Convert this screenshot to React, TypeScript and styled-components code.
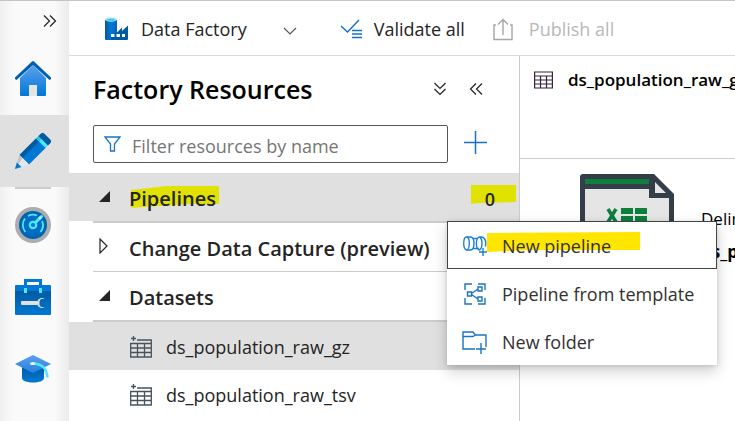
import React from "react";
import styled, { createGlobalStyle, css } from "styled-components";

const GlobalStyle = createGlobalStyle`
  * { box-sizing: border-box; }
  body { margin: 0; background: #fff; color: #242424; font: 400 18px/24px "Open Sans", "Noto Sans", sans-serif; }
  button, input { font: inherit; color: inherit; }
  svg { display: block; flex: none; }
`;

const Shell = styled.div`
  display: flex;
  height: 100vh;
  overflow: hidden;
  border-top: 1px solid #c4c4c4;
`;
const plainButton = css`
  display: flex;
  align-items: center;
  padding: 0;
  border: 0;
  background: none;
  text-align: left;
  white-space: nowrap;
`;
const Rail = styled.nav`
  flex: none;
  display: flex;
  flex-direction: column;
  width: 69px;
  background: linear-gradient(90deg, #f0f0f0, #fafafa 14px, #fafafa 55px, #ebebeb);
`;
const RailToggle = styled.button`
  ${plainButton}
  height: 42px;
  padding: 0 0 2px 43px;
`;
const RailItem = styled.button<{ $selected?: boolean }>`
  ${plainButton}
  justify-content: center;
  height: 72px;
  padding-right: 3px;
  background: ${(p) => (p.$selected ? "#e0e0e0" : "transparent")};
`;
const RailDivider = styled.div`
  height: 2px;
  margin: 0 18px 0 15px;
  background: #ccc;
`;
const Main = styled.main`
  flex: 1;
  min-width: 0;
  display: flex;
  flex-direction: column;
`;
const Toolbar = styled.header`
  flex: none;
  display: flex;
  align-items: center;
  height: 55px;
  padding-left: 36px;
  border-bottom: 1px solid #dcdcdc;
`;
const ToolButton = styled.button<{ $space: number; $gap?: number }>`
  ${plainButton}
  gap: ${(p) => p.$gap ?? 12}px;
  height: 40px;
  margin-right: ${(p) => p.$space}px;
  padding-top: 2px;
  &:disabled { color: #b8b8b8; }
`;
const MenuCaret = styled.svg`
  margin: 4px 0 0 24px;
`;
const Body = styled.div`
  flex: 1;
  min-height: 0;
  display: flex;
`;
const Resources = styled.aside`
  flex: none;
  width: 451px;
  border-right: 1px solid #ccc;
`;
const PaneHeader = styled.div`
  display: flex;
  align-items: center;
  gap: 22px;
  height: 69px;
  padding: 0 36px 4px 24px;
`;
const Title = styled.h1`
  flex: 1;
  margin: 0;
  color: #000;
  font-size: 25px;
  font-weight: 600;
  line-height: 32px;
`;
const IconButton = styled.button`${plainButton}`;
const FilterRow = styled.div`
  display: flex;
  align-items: center;
  gap: 16px;
  margin-bottom: 10px;
  padding: 0 32px 0 24px;
`;
const AddButton = styled.button`
  ${plainButton}
  padding-bottom: 4px;
`;
const FilterBox = styled.label`
  flex: 1;
  display: flex;
  align-items: center;
  gap: 11px;
  height: 38px;
  padding-left: 10px;
  border: 1px solid #555;
  border-radius: 2px;
`;
const FilterInput = styled.input`
  flex: 1;
  min-width: 0;
  padding: 4px 0 0;
  border: 0;
  outline: 0;
  background: none;
  &::placeholder { color: #767676; opacity: 1; }
`;
const Group = styled.section`position: relative;`;
const GroupHeader = styled.button<{ $selected?: boolean }>`
  ${plainButton}
  width: 100%;
  height: 48px;
  gap: 16px;
  padding: 3px 24px 0 30px;
  background: ${(p) => (p.$selected ? "#e0e0e0" : "#fff")};
  font-size: 20px;
  font-weight: 600;
`;
const Arrow = styled.svg`
  margin: 0 3px 5px 0;
`;
const GroupName = styled.span`flex: 1;`;
const Count = styled.span`
  font-size: 18px;
`;
const Rule = styled.div<{ $thick?: boolean }>`
  height: ${(p) => (p.$thick ? 2 : 1)}px;
  margin-left: 24px;
  background: #ccc;
`;
const Marked = styled.span`
  position: relative;
  display: inline-block;
  isolation: isolate;
`;
const Marker = styled.svg`
  position: absolute;
  z-index: -1;
  left: 0;
  top: 0;
  overflow: visible;
`;
const DatasetRow = styled.button<{ $selected?: boolean }>`
  ${plainButton}
  width: 100%;
  height: 48px;
  gap: 14px;
  padding: 1px 0 0 61px;
  background: ${(p) => (p.$selected ? "#e0e0e0" : "#fff")};
`;
const Menu = styled.div`
  position: absolute;
  z-index: 2;
  top: 48px;
  left: 378px;
  width: 270px;
  background: #fff;
  box-shadow: 0 6px 14px rgba(0, 0, 0, 0.2), 0 1px 4px rgba(0, 0, 0, 0.12);
`;
const MenuItem = styled.button<{ $focused?: boolean }>`
  ${plainButton}
  width: 100%;
  height: 48px;
  gap: 14px;
  padding: 2px 0 0 14px;
  border: 1px solid ${(p) => (p.$focused ? "#444" : "transparent")};
  color: #323130;
`;
const MenuIcon = styled.span`
  display: flex;
  width: 26px;
`;
const Editor = styled.section`
  flex: 1;
  min-width: 0;
  overflow: hidden;
  color: #000;
`;
const TabStrip = styled.div`
  height: 103px;
  padding: 12px 0 0 14px;
  border-bottom: 1px solid #ccc;
`;
const Tab = styled.button`
  ${plainButton}
  gap: 15px;
  font-size: 17px;
  font-weight: 600;
`;
const Summary = styled.div`
  display: flex;
  gap: 27px;
  padding: 15px 0 0 60px;
`;
const Details = styled.dl`
  margin: 0;
  padding-top: 33px;
  font-size: 17px;
  white-space: nowrap;
`;
const Kind = styled.dt``;
const Name = styled.dd`
  margin: 9px 0 0;
  font-weight: 700;
`;

const DoubleChevron = ({ rotate = 0 }: { rotate?: number }) => (
  <svg width="14" height="14" viewBox="0 0 14 14" fill="none" stroke="#222" strokeWidth="1.2">
    <path transform={`rotate(${rotate} 7 7)`} d="M1 1.5 6.5 7 1 12.5M7 1.5 12.5 7 7 12.5" />
  </svg>
);

const HomeIcon = () => (
  <svg width="36" height="36" viewBox="0 0 36 36">
    <defs><linearGradient id="home" x2="0" y2="1"><stop stopColor="#5ea0ef" /><stop offset="1" stopColor="#0078d4" /></linearGradient></defs>
    <path fill="url(#home)" d="M5 17 18 4l13 13v17a1 1 0 0 1-1 1H6a1 1 0 0 1-1-1z" />
    <path fill="#0060aa" d="M17 .5a1.5 1.5 0 0 1 2 0l17 16V18l-1.500 1L18 4 1.500 19 0 18v-1.500z" />
    <path fill="#e4e4e4" d="M14 24h8v11h-8z" />
  </svg>
);
const PencilIcon = () => (
  <svg width="36" height="36" viewBox="0 0 36 36">
    <path fill="#0078d4" d="m4.500 22 17-17 9.500 9.500-17 17z" />
    <path fill="#005ba1" d="m4.500 22 17-17 3 3-17 17z" />
    <path fill="#50e6ff" d="m21 5.500 3-3 9.500 9.500-3 3z" />
    <path fill="#32bedd" d="m21 5.500 3-3 3 3-3 3z" />
    <path fill="#005ba1" d="m23.500 3 2-2a3 3 0 0 1 4.200 0L35 6.300a3 3 0 0 1 0 4.200l-2 2z" />
    <path fill="#e6e6e6" d="m4.500 22 9.500 9.500L0 36z" />
    <path fill="#c3c3c3" d="m4.500 22 3 3L0 36z" />
    <path fill="#0078d4" d="m1.800 29.500 4.700 4.500L0 36z" />
  </svg>
);
const GaugeIcon = () => (
  <svg width="36" height="36" viewBox="0 0 36 36" fill="none">
    <defs><radialGradient id="dial"><stop stopColor="#0078d4" /><stop offset="1" stopColor="#0062b0" /></radialGradient></defs>
    <circle cx="18" cy="18" r="18" fill="#adadad" />
    <circle cx="18" cy="18" r="14" fill="url(#dial)" />
    <g stroke="#50e6ff" strokeWidth="1.800">
      <path d="M10.500 25A10.500 10.500 0 0 1 10 11.500M13 9a10.500 10.500 0 0 1 9-.5M27 14a10.500 10.500 0 0 1-1.500 11" />
      <circle cx="18" cy="18" r="3.200" strokeWidth="2.200" />
      <path d="m20.500 15.500 7-7" strokeWidth="3" />
    </g>
    <path d="m24 12 2-2" stroke="#c4f5ff" strokeWidth="2.500" />
  </svg>
);
const ToolboxIcon = () => (
  <svg width="36" height="36" viewBox="0 0 36 36">
    <defs><linearGradient id="box" x2="0" y2="1"><stop stopColor="#005ba1" /><stop offset="1" stopColor="#0078d4" /></linearGradient></defs>
    <path fill="none" stroke="#0078d4" strokeWidth="3" d="M10.500 7V1.500h15V7" />
    <path fill="url(#box)" d="M0 12h36v23a1 1 0 0 1-1 1H1a1 1 0 0 1-1-1z" />
    <path fill="#0078d4" d="M1 6h34a1 1 0 0 1 1 1v5H0V7a1 1 0 0 1 1-1z" />
    <path fill="#50e6ff" d="M9 9h3v5H9zM24 9h3v5h-3z" />
    <path fill="#e0e0e0" d="M7 22h15.500a4.500 4.500 0 0 1 7-2H26l-1.500 2v4l1.500 2h3.500a4.500 4.500 0 0 1-7-2H7a1 1 0 0 1-1-1v-2a1 1 0 0 1 1-1z" />
  </svg>
);
const CapIcon = () => (
  <svg width="36" height="30" viewBox="0 0 36 30">
    <defs>
      <linearGradient id="cap" x2="0" y2="1"><stop stopColor="#005ba1" /><stop offset="1" stopColor="#0078d4" /></linearGradient>
      <linearGradient id="board" x2="0" y2="1"><stop stopColor="#5ea0ef" /><stop offset="1" stopColor="#2480df" /></linearGradient>
    </defs>
    <path fill="url(#cap)" d="M7 12h22v12c0 6-22 6-22 0z" />
    <path fill="url(#board)" d="M18 1 36 10 18 19 0 10z" />
    <ellipse cx="18" cy="9.500" rx="3" ry="1.600" fill="#e8f4ff" />
    <path fill="none" stroke="#50e6ff" strokeWidth="2.600" d="M20 9.500c7 1.500 11 3 12.500 14" />
  </svg>
);
const FactoryIcon = () => (
  <svg width="24" height="24" viewBox="0 0 24 24">
    <defs><linearGradient id="silo"><stop stopColor="#005ba1" /><stop offset=".5" stopColor="#0078d4" /><stop offset="1" stopColor="#0065b5" /></linearGradient></defs>
    <path fill="url(#silo)" d="M0 3h12v20H1a1 1 0 0 1-1-1z" />
    <path fill="#005ba1" d="M6 20l6-4.500 5-5V14l6-5.500V22a1 1 0 0 1-1 1H6z" />
    <ellipse cx="6" cy="2.500" rx="6" ry="2.200" fill="#c3e6ef" />
    <ellipse cx="6" cy="2.700" rx="4.300" ry="1.300" fill="#32d4f5" />
    <path fill="#fff" d="M6 17h3.500v3H6zM11.500 17H15v3h-3.500zM17 17h3v3h-3z" />
  </svg>
);
const ValidateIcon = () => (
  <svg width="22" height="20" viewBox="0 0 22 20" fill="none" stroke="#1a6fc9">
    <path strokeWidth="1.500" d="m1 7 6.500 6L19 1" />
    <path strokeWidth="1.600" d="M12 11.500h10M12 15h10M12 18.500h10" />
  </svg>
);
const PublishIcon = () => (
  <svg width="20" height="23" viewBox="0 0 20 23" fill="none" stroke="#a6a6a6" strokeWidth="1.400">
    <path d="M3 7H1v14.500h18V7h-2M10 17V1.500M5 6.500l5-5 5 5" />
  </svg>
);
const FunnelIcon = () => (
  <svg width="17" height="16" viewBox="0 0 17 16" fill="none" stroke="#1a73c8" strokeWidth="1.300">
    <path d="M1 1h15l-5.500 7v7h-4V8z" />
  </svg>
);
const TableIcon = () => (
  <svg width="19" height="18" viewBox="0 0 19 18" fill="none" stroke="#33243b" strokeWidth="1.200">
    <path d="M.6 1h17.800v16H.6zM.6 5h17.800M.6 9h17.800M.6 13h17.800M6.500 5v12M12.500 5v12" />
  </svg>
);
const DatasetIcon = () => (
  <svg width="22" height="22" viewBox="0 0 22 22" fill="none" stroke="#46535d" strokeWidth="1.300">
    <path d="M7 4h14.300v17H.7V7.500h20.600M.7 12h20.600M.7 16.500h20.600M7.500 7.500V21M14.500 7.500V21M3.500 0v5M1 2.500h5" />
  </svg>
);
const PipelineIcon = () => (
  <svg width="26" height="20" viewBox="0 0 26 20" fill="none" stroke="#1a7fd4" strokeWidth="1.400">
    <ellipse cx="4.500" cy="7.500" rx="2.800" ry="6.500" />
    <path d="M4.500 1H9c4 1 4 12 0 13H4.500M10.500 2.500h5.500M10.500 12.500H15M17 1c-3.500 2-3.500 11 0 13M14 12.500h3M17 1c4 1 4 12 0 13M17 1h3c3.500 1 4 6 3.500 9.500M21 12v8M17 16h8" />
  </svg>
);
const TemplateIcon = () => (
  <svg width="24" height="22" viewBox="-2 0 24 22" fill="none" stroke="#1a73c8" strokeWidth="1.400">
    <path d="M8 1H1v6M14 1h7v6M8 21H1v-6M14 21h7v-6M3.500 9h4v4h-4zM14 4h4v4h-4zM14 14h4v4h-4zM7.500 10.500 14 6M7.500 11.500 14 16" />
  </svg>
);
const FolderIcon = () => (
  <svg width="26" height="23" viewBox="0 0 26 23" fill="none" stroke="#1a73c8" strokeWidth="1.400">
    <path d="M13 18H1V1h10l2.500 3H24v12M1 5.500h10L13.500 4M19 12v11M14 18h10" />
  </svg>
);
const SheetIcon = () => (
  <svg width="94" height="112" viewBox="0 0 94 112">
    <path fill="#343e48" d="M3 0h71l20 20v89a3 3 0 0 1-3 3H3a3 3 0 0 1-3-3V3a3 3 0 0 1 3-3z" />
    <path fill="#e5e5e5" d="M5 15h64v9h20v83H5zM75 8l11 11H75z" />
    <path fill="#0b7f3b" d="M5 5h64v5H5zM41 34h12v6H41zM55 34h12v6H55zM41 42h12v6H41zM55 42h12v6H55z" />
    <path fill="none" stroke="#0b7f3b" strokeWidth="3.500" d="m28 35 8 13M36 35l-8 13" />
  </svg>
);
const OpenArrow = () => <Arrow width="11" height="11"><path fill="#242424" d="M0 11 11 0v11z" /></Arrow>;
const ClosedArrow = () => (
  <Arrow width="11" height="16" fill="none" stroke="#242424" strokeWidth="1.200"><path d="M1 1v14l7-7z" /></Arrow>
);

export default function App() {
  return (
    <>
      <GlobalStyle />
      <Shell>
        <Rail aria-label="Hubs">
          <RailToggle aria-label="Expand navigation"><DoubleChevron /></RailToggle>
          <RailItem aria-label="Home"><HomeIcon /></RailItem>
          <RailItem aria-label="Author" $selected><PencilIcon /></RailItem>
          <RailDivider />
          <RailItem aria-label="Monitor"><GaugeIcon /></RailItem>
          <RailItem aria-label="Manage"><ToolboxIcon /></RailItem>
          <RailItem aria-label="Learning center"><CapIcon /></RailItem>
        </Rail>
        <Main>
          <Toolbar>
            <ToolButton $space={43}>
              <FactoryIcon />
              Data Factory
              <MenuCaret width="14" height="9" viewBox="0 0 14 9" fill="none" stroke="#555" strokeWidth="1.200">
                <path d="m1 1 6 6 6-6" />
              </MenuCaret>
            </ToolButton>
            <ToolButton $space={28}><ValidateIcon />Validate all</ToolButton>
            <ToolButton $space={0} $gap={16} disabled><PublishIcon />Publish all</ToolButton>
          </Toolbar>
          <Body>
            <Resources>
              <PaneHeader>
                <Title>Factory Resources</Title>
                <IconButton aria-label="Expand all"><DoubleChevron rotate={90} /></IconButton>
                <IconButton aria-label="Collapse pane"><DoubleChevron rotate={180} /></IconButton>
              </PaneHeader>
              <FilterRow>
                <FilterBox>
                  <FunnelIcon />
                  <FilterInput aria-label="Filter resources by name" placeholder="Filter resources by name" />
                </FilterBox>
                <AddButton aria-label="Add new resource">
                  <svg width="23" height="23" stroke="#1a6fc9" strokeWidth="1.500"><path d="M11.500 0v23M0 11.500h23" /></svg>
                </AddButton>
              </FilterRow>
              <Group>
                <GroupHeader $selected aria-expanded="true">
                  <OpenArrow />
                  <GroupName>
                    <Marked>
                      <Marker width="90" height="22"><path fill="#e2e200" d="M2 3 38-1h52v18H58L2 21z" /></Marker>
                      Pipelines
                    </Marked>
                  </GroupName>
                  <Count>
                    <Marked>
                      <Marker width="30" height="19"><path fill="#e2e200" d="M-14-2h45v17L-7 16l-7 1z" /></Marker>
                      0
                    </Marked>
                  </Count>
                </GroupHeader>
                <Menu role="menu">
                  <MenuItem role="menuitem" $focused>
                    <MenuIcon><PipelineIcon /></MenuIcon>
                    <Marked>
                      <Marker width="138" height="22"><path fill="#ffe600" d="M-15-1 138-2v18H30L6 17l-21 1z" /></Marker>
                      New pipeline
                    </Marked>
                  </MenuItem>
                  <MenuItem role="menuitem"><MenuIcon><TemplateIcon /></MenuIcon>Pipeline from template</MenuItem>
                  <MenuItem role="menuitem"><MenuIcon><FolderIcon /></MenuIcon>New folder</MenuItem>
                </Menu>
              </Group>
              <Rule $thick />
              <GroupHeader aria-expanded="false"><ClosedArrow /><GroupName>Change Data Capture (preview)</GroupName></GroupHeader>
              <Rule />
              <GroupHeader aria-expanded="true"><OpenArrow /><GroupName>Datasets</GroupName></GroupHeader>
              <Rule $thick />
              <DatasetRow $selected><DatasetIcon />ds_population_raw_gz</DatasetRow>
              <DatasetRow><DatasetIcon />ds_population_raw_tsv</DatasetRow>
            </Resources>
            <Editor>
              <TabStrip><Tab><TableIcon />ds_population_raw_gz</Tab></TabStrip>
              <Summary>
                <SheetIcon />
                <Details>
                  <Kind>DelimitedText</Kind>
                  <Name>ds_population_raw_gz</Name>
                </Details>
              </Summary>
            </Editor>
          </Body>
        </Main>
      </Shell>
    </>
  );
}
